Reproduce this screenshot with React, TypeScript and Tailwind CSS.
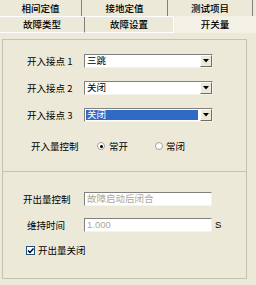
const font = { fontFamily: '"Noto Sans CJK SC", "Liberation Sans", sans-serif' };

function Arrow() {
  return (
    <div className="w-[12px] h-[12px] bg-[#ece9d8] border border-t-white border-l-white border-b-[#716f64] border-r-[#716f64] flex items-center justify-center">
      <svg width="6" height="4" viewBox="0 0 6 4">
        <polygon points="0,0 6,0 3,3.5" fill="#000" />
      </svg>
    </div>
  );
}

function Combo({ value, selected }: { value: string; selected?: boolean }) {
  return (
    <div className="w-[129px] h-[14px] bg-white border border-t-[#808080] border-l-[#808080] border-b-[#f4f3ee] border-r-[#f4f3ee] flex items-center pl-[1px] pr-[0px]">
      <div className={"flex-1 h-[10px] flex items-center leading-none pl-[1px] " + (selected ? "bg-[#316ac5] text-white mr-[2px]" : "text-black")}>
        {value}
      </div>
      <Arrow />
    </div>
  );
}

function Radio({ checked }: { checked?: boolean }) {
  return (
    <div className="w-[8px] h-[8px] rounded-full bg-white border border-[#a5a296] flex items-center justify-center">
      {checked && <div className="w-[3px] h-[3px] rounded-full bg-black" />}
    </div>
  );
}

export default function App() {
  return (
    <div className="w-[256px] h-[285px] bg-[#ece9d8] text-[9.5px] text-black overflow-hidden" style={font}>
      {/* tab row 1 */}
      <div className="flex h-[17px] border-b border-white">
        <div className="w-[82px] border-r border-[#808080] flex items-center justify-center font-medium pt-[1px]">相间定值</div>
        <div className="w-[86px] border-r border-[#808080] flex items-center justify-center font-medium pt-[1px]">接地定值</div>
        <div className="w-[85px] border-r border-[#808080] flex items-center justify-center font-medium pt-[1px]">测试项目</div>
        <div className="flex-1" />
      </div>
      {/* tab row 2 */}
      <div className="flex h-[16px]">
        <div className="w-[85px] border-r border-[#808080] border-b border-b-white flex items-center justify-center font-medium">故障类型</div>
        <div className="w-[88px] border-b border-white flex items-center justify-center font-medium">故障设置</div>
        <div className="flex-1 bg-[#f3f1e6] border-l border-white flex items-start justify-center font-medium pt-[1px] -mt-[1px]">开关量</div>
      </div>
      {/* panel */}
      <div className="pt-[6px] pl-[2px] w-[247px]">
        <div className="h-[133px] border border-[#c5c2b2] flex flex-col pt-[14px] pl-[24px]">
          <div className="flex flex-col gap-[13px]">
            <div className="flex items-center h-[14px]">
              <span className="w-[57px]">开入接点 1</span>
              <Combo value="三跳" />
            </div>
            <div className="flex items-center h-[14px]">
              <span className="w-[57px]">开入接点 2</span>
              <Combo value="关闭" />
            </div>
            <div className="flex items-center h-[14px]">
              <span className="w-[57px]">开入接点 3</span>
              <Combo value="关闭" selected />
            </div>
          </div>
          <div className="flex items-center h-[14px] mt-[17px] pl-[4px]">
            <span className="w-[66px]">开入量控制</span>
            <Radio checked />
            <span className="ml-[4px] w-[46px]">常开</span>
            <Radio />
            <span className="ml-[3px]">常闭</span>
          </div>
        </div>
        <div className="h-[107px] border border-t-0 border-[#c5c2b2] flex flex-col pt-[20px] pl-[20px]">
          <div className="flex items-center h-[14px]">
            <span className="w-[61px]">开出量控制</span>
            <div className="w-[128px] h-[14px] bg-white border border-t-[#808080] border-l-[#808080] border-b-[#f4f3ee] border-r-[#f4f3ee] flex items-center pl-[2px] text-[#aca899] leading-none">
              故障启动后闭合
            </div>
          </div>
          <div className="flex items-center h-[14px] mt-[12px]">
            <span className="w-[57px] ml-[4px]">维持时间</span>
            <div className="w-[128px] h-[14px] bg-white border border-t-[#808080] border-l-[#808080] border-b-[#f4f3ee] border-r-[#f4f3ee] flex items-center pl-[2px] text-[#aca899] leading-none" style={{ fontFamily: '"Liberation Sans", sans-serif' }}>
              1.000
            </div>
            <span className="ml-[3px]" style={{ fontFamily: '"Liberation Sans", sans-serif' }}>S</span>
          </div>
          <div className="flex items-center h-[12px] mt-[12px] pl-[3px]">
            <div className="w-[9px] h-[9px] bg-white border border-[#1c5180] flex items-center justify-center">
              <svg width="7" height="7" viewBox="0 0 7 7">
                <polyline points="1,3.5 3,5.5 6.5,1.5" fill="none" stroke="#000" strokeWidth="1.5" />
              </svg>
            </div>
            <span className="ml-[3px]">开出量关闭</span>
          </div>
        </div>
      </div>
    </div>
  );
}
